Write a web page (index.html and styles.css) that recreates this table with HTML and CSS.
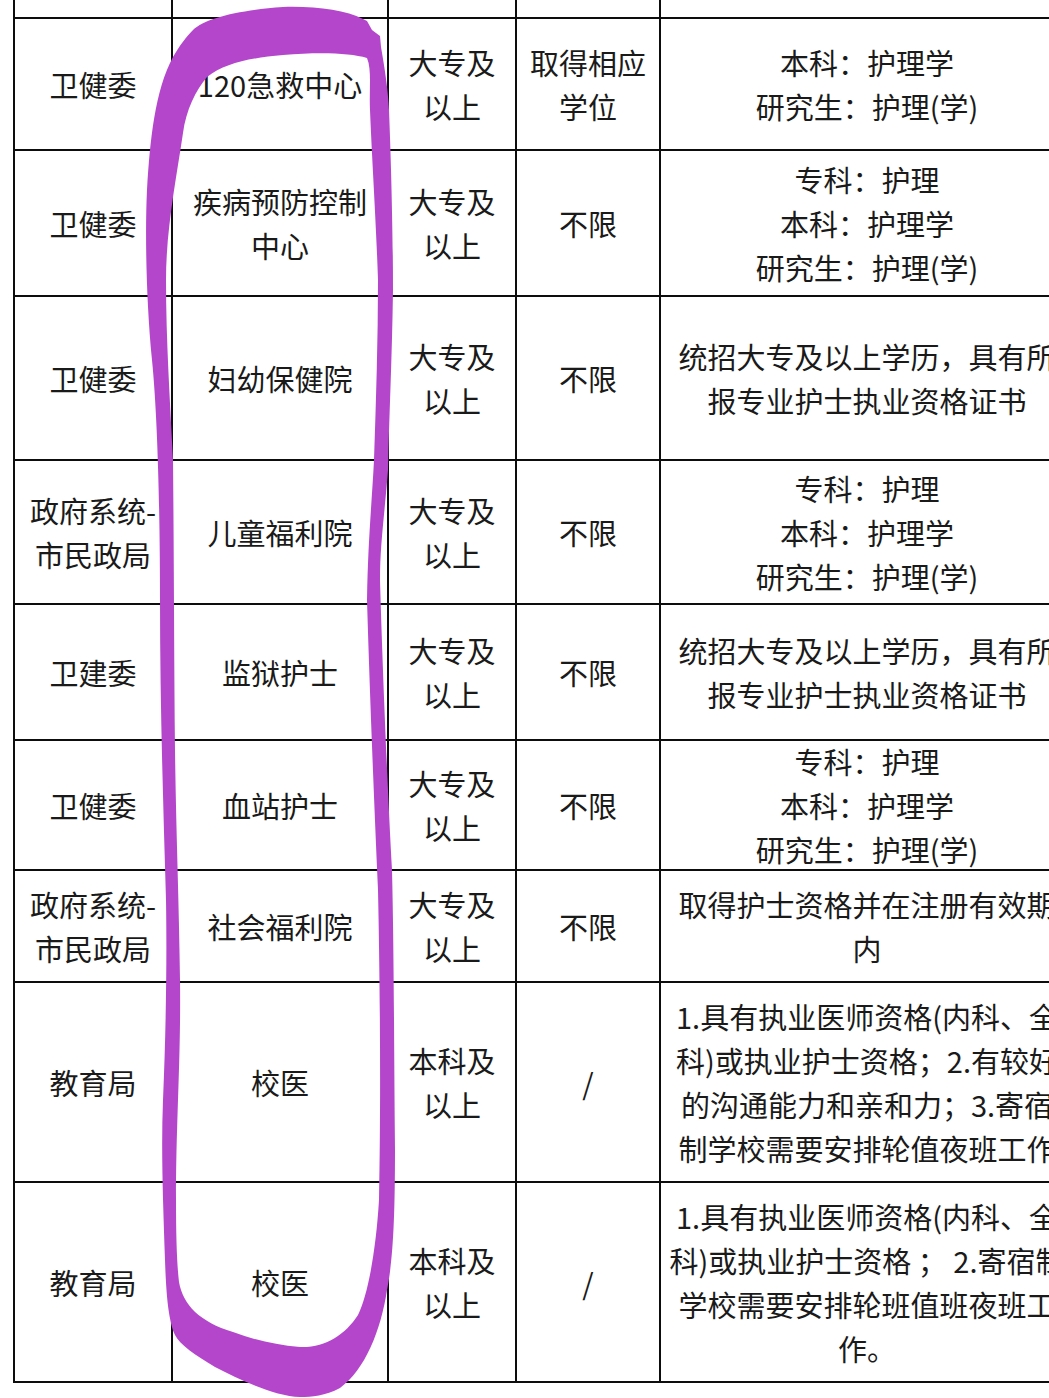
FILE: index.html
```html
<!DOCTYPE html>
<html lang="zh-CN">
<head>
<meta charset="utf-8">
<title>岗位表</title>
<link rel="stylesheet" href="styles.css">
</head>
<body>
<div class="page">
  <div class="sheet">
    <div class="cell stub"></div><div class="cell stub"></div><div class="cell stub"></div><div class="cell stub"></div><div class="cell stub"></div>

    <div class="cell">卫健委</div>
    <div class="cell">120急救中心</div>
    <div class="cell">大专及<br>以上</div>
    <div class="cell">取得相应<br>学位</div>
    <div class="cell">本科：护理学<br>研究生：护理(学)</div>

    <div class="cell">卫健委</div>
    <div class="cell">疾病预防控制<br>中心</div>
    <div class="cell">大专及<br>以上</div>
    <div class="cell">不限</div>
    <div class="cell">专科：护理<br>本科：护理学<br>研究生：护理(学)</div>

    <div class="cell">卫健委</div>
    <div class="cell">妇幼保健院</div>
    <div class="cell">大专及<br>以上</div>
    <div class="cell">不限</div>
    <div class="cell">统招大专及以上学历，具有所<br>报专业护士执业资格证书</div>

    <div class="cell">政府系统-<br>市民政局</div>
    <div class="cell">儿童福利院</div>
    <div class="cell">大专及<br>以上</div>
    <div class="cell">不限</div>
    <div class="cell">专科：护理<br>本科：护理学<br>研究生：护理(学)</div>

    <div class="cell">卫建委</div>
    <div class="cell">监狱护士</div>
    <div class="cell">大专及<br>以上</div>
    <div class="cell">不限</div>
    <div class="cell">统招大专及以上学历，具有所<br>报专业护士执业资格证书</div>

    <div class="cell">卫健委</div>
    <div class="cell">血站护士</div>
    <div class="cell">大专及<br>以上</div>
    <div class="cell">不限</div>
    <div class="cell">专科：护理<br>本科：护理学<br>研究生：护理(学)</div>

    <div class="cell">政府系统-<br>市民政局</div>
    <div class="cell">社会福利院</div>
    <div class="cell">大专及<br>以上</div>
    <div class="cell">不限</div>
    <div class="cell">取得护士资格并在注册有效期<br>内</div>

    <div class="cell">教育局</div>
    <div class="cell">校医</div>
    <div class="cell">本科及<br>以上</div>
    <div class="cell">/</div>
    <div class="cell">1.具有执业医师资格(内科、全<br>科)或执业护士资格；2.有较好<br>的沟通能力和亲和力；3.寄宿<br>制学校需要安排轮值夜班工作</div>

    <div class="cell">教育局</div>
    <div class="cell">校医</div>
    <div class="cell">本科及<br>以上</div>
    <div class="cell">/</div>
    <div class="cell">1.具有执业医师资格(内科、全<br>科)或执业护士资格 ； 2.寄宿制<br>学校需要安排轮班值班夜班工<br>作。</div>
  </div>

  <svg class="loop" width="1049" height="1398" viewBox="0 0 1049 1398" xmlns="http://www.w3.org/2000/svg">
    <path fill="#b446cc" fill-rule="evenodd" d="
      M 193 30
      C 205 18, 240 10, 283 7
      C 315 6, 345 10, 363 19
      L 367 21 L 372 30 L 380 36 L 381 47
      C 385 70, 388 90, 389 110
      C 391 160, 393 230, 393 290
      C 392 360, 389 420, 388 470
      C 384 520, 380 545, 380 580
      C 382 650, 387 780, 392 870
      C 394 950, 394 1050, 395 1150
      C 395 1220, 393 1260, 387 1290
      C 381 1330, 365 1370, 340 1388
      C 325 1396, 312 1397, 300 1397
      C 275 1396, 240 1380, 215 1367
      C 195 1355, 180 1345, 175 1335
      C 168 1320, 166 1290, 165 1260
      C 163 1200, 161 1150, 163 1100
      C 166 1030, 167 960, 166 900
      C 163 800, 160 700, 160 600
      C 160 520, 158 420, 152 360
      C 146 300, 145 230, 147 190
      C 150 140, 155 90, 173 57
      C 180 45, 186 37, 193 30 Z
      M 207 77
      C 196 90, 186 110, 183 133
      C 176 180, 166 230, 166 280
      C 166 340, 170 400, 173 460
      C 174 560, 174 650, 175 750
      C 176 830, 179 900, 180 980
      C 181 1060, 176 1120, 176 1200
      C 176 1240, 177 1265, 179 1282
      C 183 1305, 200 1322, 233 1332
      C 255 1340, 275 1345, 300 1347
      C 325 1348, 345 1335, 358 1315
      C 368 1295, 376 1250, 379 1200
      C 381 1100, 380 980, 378 890
      C 374 800, 370 700, 367 600
      C 368 540, 372 500, 374 460
      C 376 400, 378 340, 378 280
      C 376 220, 372 160, 370 110
      C 369 90, 372 70, 367 58
      C 350 53, 320 52, 283 55
      C 250 58, 225 63, 207 77 Z"/>
  </svg>
</div>
</body>
</html>
```

FILE: styles.css
```css
html, body {
  margin: 0;
  padding: 0;
  overflow: hidden;
  background: #ffffff;
}

.page {
  position: relative;
  width: 1049px;
  height: 1398px;
  overflow: hidden;
}

.sheet {
  display: grid;
  grid-template-columns: 158px 216px 128px 144px 414px;
  grid-template-rows: 19px 132px 146px 164px 144px 136px 130px 112px 200px 200px;
  margin-left: 13px;
  width: 1062px;
  border-left: 2px solid #0d0d0d;
  font-family: "Noto Sans CJK SC", "Noto Sans", sans-serif;
  font-size: 29px;
  line-height: 44px;
  color: #1a1a1a;
}

.cell {
  box-sizing: border-box;
  display: flex;
  align-items: center;
  justify-content: center;
  text-align: center;
  white-space: nowrap;
  border-right: 2px solid #0d0d0d;
  border-bottom: 2px solid #0d0d0d;
}

.loop {
  position: absolute;
  left: 0;
  top: 0;
  pointer-events: none;
}
```
